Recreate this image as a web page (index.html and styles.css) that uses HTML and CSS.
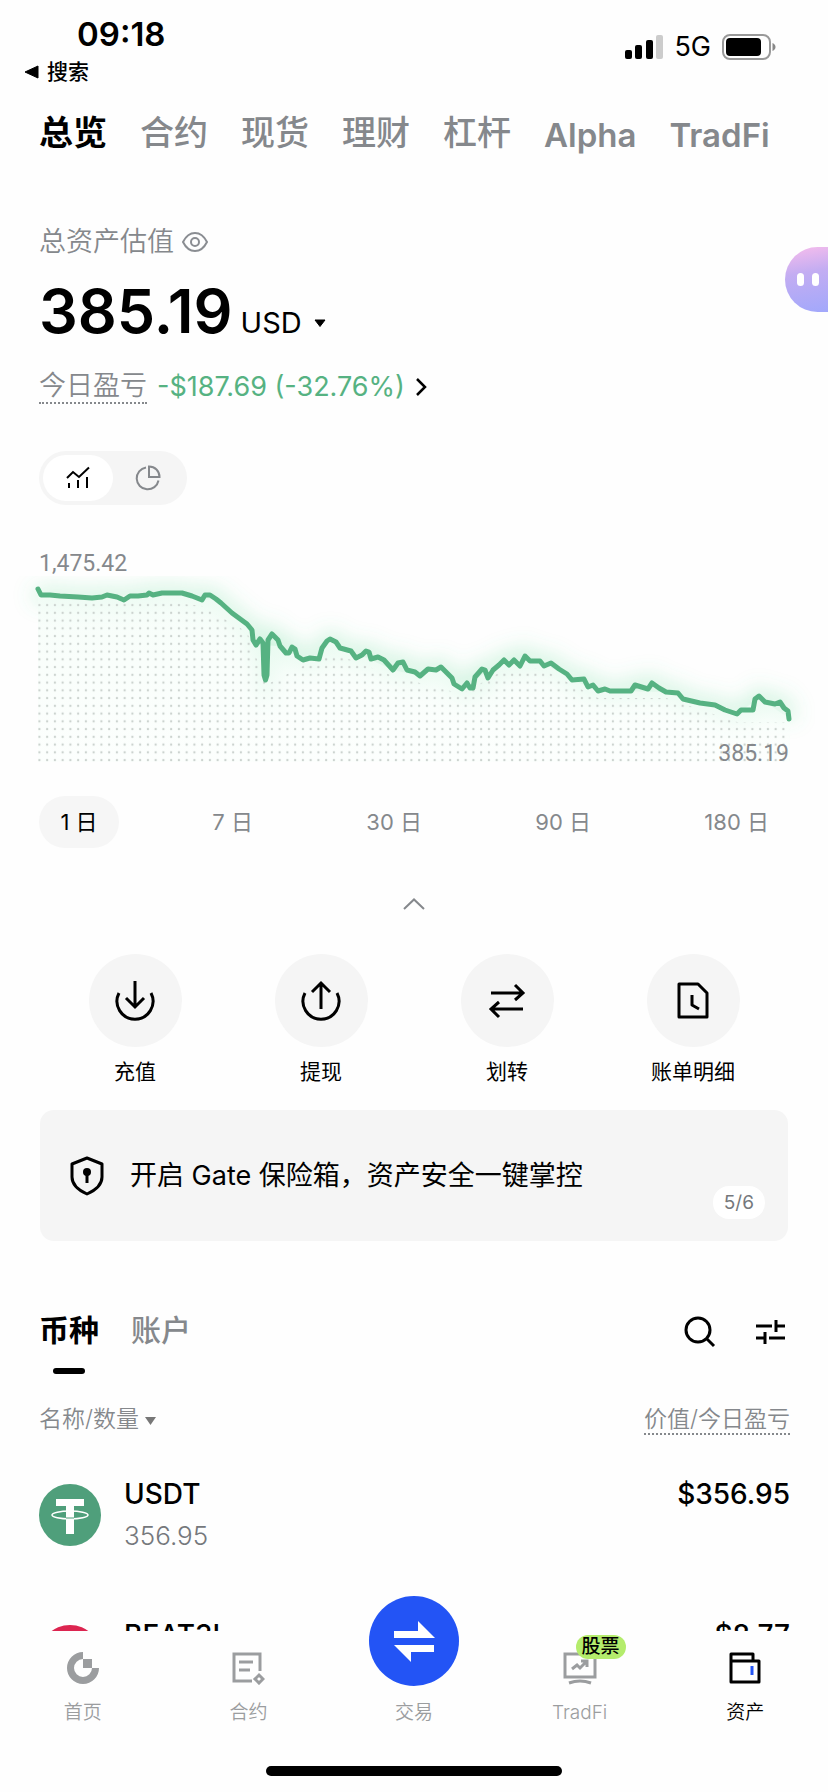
FILE: index.html
```html
<!DOCTYPE html>
<html lang="zh-CN">
  <head>
    <title>资产总览</title>
    <meta charset="utf-8" />
    <meta name="viewport" content="width=device-width, initial-scale=1" />
    <link rel="stylesheet" href="styles.css">
  </head>
  <body>
    <div class="app">
      <main class="content">
        <header class="status">
          <div class="status-left">
            <span class="time">09:18</span>
            <a href="#" class="back">
              <svg width="15" height="14" viewBox="0 0 15 14"><path d="M14 1v12L1 7z" fill="#000" stroke="#000" stroke-linejoin="round" /></svg>
              搜索
            </a>
          </div>
          <div class="status-right">
            <svg width="38" height="24" viewBox="0 0 38 24">
              <rect x="0" y="15" width="7" height="9" rx="2" />
              <rect x="10" y="10" width="7" height="14" rx="2" />
              <rect x="21" y="5" width="7" height="19" rx="2" />
              <rect x="31" y="0" width="7" height="24" rx="2" fill="#ccc" />
            </svg>
            <span class="network">5G</span>
            <svg width="54" height="26" viewBox="0 0 54 26">
              <rect x="1" y="1" width="47" height="24" rx="7" fill="none" stroke="#999" stroke-width="2" />
              <rect x="4" y="4" width="35" height="18" rx="4" />
              <path d="M50.500 9c4 1.500 4 6.500 0 8z" fill="#888" />
            </svg>
          </div>
        </header>

        <nav class="tabs">
          <a href="#" class="active">总览</a>
          <a href="#">合约</a>
          <a href="#">现货</a>
          <a href="#">理财</a>
          <a href="#">杠杆</a>
          <a href="#" class="latin">Alpha</a>
          <a href="#" class="latin">TradFi</a>
        </nav>

        <section class="summary">
          <div class="summary-label">
            总资产估值
            <button class="plain" aria-label="隐藏金额">
              <svg width="26" height="20" viewBox="0 0 26 20" fill="none" stroke="#8a8d92" stroke-width="2">
                <path d="M1 10C4 4 8 1 13 1s9 3 12 9c-3 6-7 9-12 9S4 16 1 10z" />
                <circle cx="13" cy="10" r="4" />
              </svg>
            </button>
          </div>
          <div class="total">
            <strong>385.19</strong>
            <button class="plain currency">
              USD
              <svg width="12" height="8" viewBox="0 0 12 8"><path d="M1 1h10L6 7.500z" fill="#000" stroke="#000" stroke-linejoin="round" /></svg>
            </button>
          </div>
          <a href="#" class="pnl">
            <span class="hint">今日盈亏</span>
            <span class="pnl-value">-$187.69 (-32.76%)</span>
            <svg width="12" height="18" viewBox="0 0 12 18" fill="none" stroke="#000" stroke-width="2.500"><path d="M2 1l8 8-8 8" /></svg>
          </a>
          <div class="toggle">
            <button class="active" aria-label="走势图">
              <svg width="24" height="24" viewBox="0 0 24 24" fill="none" stroke="#000" stroke-width="2">
                <path d="M1 12l6-6 6 5L23 1.500M3 17v5M12 14v8M21 11v11" />
              </svg>
            </button>
            <button aria-label="分布图">
              <svg width="26" height="26" viewBox="0 0 26 26" fill="none" stroke="#85888c" stroke-width="2">
                <path d="M11 2.500a11 11 0 1 0 12.500 13" />
                <path d="M14 1.500v10.500h10.500C24.500 6 20 1.500 14 1.500z" />
              </svg>
            </button>
          </div>
        </section>

        <section class="chart">
          <span class="chart-high">1,475.42</span>
          <svg class="chart-plot" viewBox="0 576 828 192">
            <defs>
              <pattern id="dots" x="35.500" y="601.200" width="7.750" height="7.750" patternUnits="userSpaceOnUse">
                <circle cx="3.900" cy="3.900" r="1.200" fill="#ccd3cf" />
              </pattern>
              <filter id="glow" x="-10%" y="-40%" width="120%" height="180%">
                <feGaussianBlur stdDeviation="10" />
              </filter>
              <linearGradient id="fade" x1="0" y1="0" x2="0" y2="1">
                <stop offset="0" stop-color="#f3fdf7" stop-opacity="0.7" />
                <stop offset="1" stop-color="#fafffc" stop-opacity="0.5" />
              </linearGradient>
              <path id="line" d="M38 589L41 595L50 595L60 596L78 597L92 598L102 597L107 595L117 597L124 600L130 596L138 596L147 595L149 593L153 595L162 593L182 593L192 596L202 600L205 595L210 595L216 599L221 603L232 613L247 624L252 630L253 640L256 645L260 639L263 643L264 675L265.500 680L267 675L268 640L272 634L278 640L280 646L286 653L289 653L292 647L295 649L297 656L303 660L310 658L319 659L322 648L327 641L330 639L336 642L340 648L351 651L356 658L362 655L366 651L369 652L371 659L378 657L384 660L393 670L398 663L403 662L407 670L415 672L420 676L428 669L436 670L441 667L447 673L452 678L454 684L462 689L467 683L470 688L473 688L475 677L482 669L485 670L488 678L493 670L499 665L504 660L509 665L514 660L520 666L525 656L530 661L540 661L544 666L551 663L559 669L567 674L572 680L584 679L588 687L593 685L598 691L605 689L610 691L631 691L635 685L648 689L652 683L659 688L666 692L678 693L683 699L700 703L715 705L725 710L737 714L741 710L753 710L755 699L759 696L765 702L775 704L780 702L784 708L788 711L789 719" />
            </defs>
            <use href="#line" fill="none" stroke="#58d68d" stroke-opacity="0.250" stroke-width="16" filter="url(#glow)" />
            <path d="M38 594L78 597L147 595L182 593L202 600L216 599L247 624L256 645L280 646L303 660L319 659L330 639L351 651L393 670L420 676L441 667L462 689L504 660L540 661L572 680L598 691L666 692L737 714L759 698L790 719V762H38z" fill="url(#fade)" />
            <path d="M38 600L147 600L202 606L247 632L266 685L303 666L330 652L393 676L462 694L504 670L540 668L598 698L666 698L737 722L790 722V764H38z" fill="url(#dots)" />
            <use href="#line" fill="none" stroke="#56b282" stroke-width="5" stroke-linejoin="round" stroke-linecap="round" />
          </svg>
          <span class="chart-low">385.19</span>
        </section>

        <div class="ranges">
          <button class="active">1 日</button>
          <button>7 日</button>
          <button>30 日</button>
          <button>90 日</button>
          <button>180 日</button>
        </div>

        <button class="plain collapse" aria-label="收起">
          <svg width="22" height="12" viewBox="0 0 22 12" fill="none" stroke="#85888c" stroke-width="2"><path d="M1 11L11 1.500 21 11" /></svg>
        </button>

        <div class="actions">
          <a href="#">
            <span class="circle">
              <svg width="42" height="42" viewBox="0 0 42 42" fill="none" stroke="#000" stroke-width="3">
                <path d="M5 13a18 18 0 1 0 32 0M21 1v26M12 18l9 9 9-9" />
              </svg>
            </span>
            充值
          </a>
          <a href="#">
            <span class="circle">
              <svg width="42" height="42" viewBox="0 0 42 42" fill="none" stroke="#000" stroke-width="3">
                <path d="M5 13a18 18 0 1 0 32 0M21 29V3M12 12l9-9 9 9" />
              </svg>
            </span>
            提现
          </a>
          <a href="#">
            <span class="circle">
              <svg width="42" height="42" viewBox="0 0 42 42" fill="none" stroke="#000" stroke-width="3">
                <path d="M5 13h31M29 5l8 8-8 7M37 29H6M13 22l-8 7 8 8" />
              </svg>
            </span>
            划转
          </a>
          <a href="#">
            <span class="circle">
              <svg width="42" height="42" viewBox="0 0 42 42" fill="none" stroke="#000" stroke-width="3">
                <path d="M7 4h19l9 9v24H7zM20 15v10l7 4" stroke-linejoin="round" />
              </svg>
            </span>
            账单明细
          </a>
        </div>

        <a href="#" class="banner">
          <svg width="36" height="40" viewBox="0 0 36 40" fill="none" stroke="#000" stroke-width="3">
            <path d="M18 2l15 6v13c0 8-6 13-15 17C9 34 3 29 3 21V8z" stroke-linejoin="round" />
            <circle cx="18" cy="16" r="4" fill="#000" stroke="none" />
            <path d="M18 17v10" />
          </svg>
          <span>开启 Gate 保险箱，资产安全一键掌控</span>
          <span class="pager">5/6</span>
        </a>

        <section class="assets">
          <div class="asset-bar">
            <button class="asset-tab active">币种</button>
            <button class="asset-tab">账户</button>
            <div class="asset-tools">
              <button class="plain" aria-label="搜索">
                <svg width="32" height="32" viewBox="0 0 32 32" fill="none" stroke="#000" stroke-width="3"><circle cx="14" cy="14" r="12" /><path d="M22 22l8 8" /></svg>
              </button>
              <button class="plain" aria-label="筛选">
                <svg width="30" height="26" viewBox="0 0 30 26" fill="none" stroke="#000" stroke-width="3"><path d="M1 7h16M21 1v12M21 7h9M1 19h9M10 13v12M14 19h16" /></svg>
              </button>
            </div>
          </div>
          <table>
            <thead>
              <tr>
                <th>
                  名称/数量
                  <svg width="11" height="8" viewBox="0 0 11 8"><path d="M0 0h11L5.500 8z" fill="#777" /></svg>
                </th>
                <th><span class="hint">价值/今日盈亏</span></th>
              </tr>
            </thead>
            <tbody>
              <tr>
                <td>
                  <div class="coin">
                    <svg width="62" height="62" viewBox="0 0 62 62">
                      <circle cx="31" cy="31" r="31" fill="#4f9f7b" />
                      <path d="M17 15h28v7h-10v28h-8V22H17z" fill="#fff" />
                      <ellipse cx="31" cy="31" rx="18" ry="4" fill="none" stroke="#fff" stroke-width="1.500" />
                      <path d="M27 34h8" stroke="#4f9f7b" stroke-width="1" />
                    </svg>
                    <div>
                      <div class="coin-name">USDT</div>
                      <div class="coin-amount">356.95</div>
                    </div>
                  </div>
                </td>
                <td class="value">$356.95</td>
              </tr>
              <tr>
                <td>
                  <div class="coin">
                    <svg width="62" height="62" viewBox="0 0 62 62">
                      <circle cx="31" cy="31" r="31" fill="#dc2550" />
                      <path d="M24 6h3v6h-3zM30 6h3v6h-3z" fill="#fff" />
                    </svg>
                    <div>
                      <div class="coin-name">BEAT3L</div>
                    </div>
                  </div>
                </td>
                <td class="value">$8.77</td>
              </tr>
            </tbody>
          </table>
        </section>
      </main>

      <button class="assistant" aria-label="助手"><i></i><i></i></button>

      <footer class="dock">
        <nav class="dock-items">
          <a href="#">
            <svg width="34" height="34" viewBox="0 0 34 34">
              <path d="M17 4.500A12.500 12.500 0 1 0 29.500 17" fill="none" stroke="#9b9d9f" stroke-width="7" />
              <path d="M17 8h9v9h-9z" fill="#9b9d9f" />
            </svg>
            首页
          </a>
          <a href="#">
            <svg width="34" height="34" viewBox="0 0 34 34" fill="none" stroke="#9b9d9f" stroke-width="3">
              <path d="M29 20V3H3v27h18M8 11h14M8 19h11" />
              <path d="M28 24l4 4-4 4-4-4z" />
            </svg>
            合约
          </a>
          <a href="#">
            <span class="trade">
              <svg width="44" height="44" viewBox="0 0 44 44" fill="#fff">
                <path d="M2 12h24V2l17 17H2zM42 33H19v10L2 26h40z" />
              </svg>
            </span>
            交易
          </a>
          <a href="#">
            <svg width="34" height="34" viewBox="0 0 34 34" fill="none" stroke="#9b9d9f" stroke-width="3">
              <path d="M2 3h30v23H2zM6 32q11-4 22 0" />
              <path d="M9 18l5-4 3 3 7-7M18 10h6v6" />
            </svg>
            <span class="badge">股票</span>
            TradFi
          </a>
          <a href="#" class="active">
            <svg width="34" height="34" viewBox="0 0 34 34" fill="none" stroke="#000" stroke-width="3" stroke-linejoin="round">
              <path d="M3 10V3h22v7M3 10h28v21H3z" />
              <path d="M24 15v9" stroke="#2354f5" />
            </svg>
            资产
          </a>
        </nav>
        <div class="home-bar"></div>
      </footer>
    </div>
  </body>
</html>
```
FILE: styles.css
```css
* {
  box-sizing: border-box;
}
html,
body {
  margin: 0;
  height: 100%;
  font-family: Inter, "Noto Sans CJK SC", sans-serif;
  color: #000;
  background: #fefefe;
}
a {
  color: inherit;
  text-decoration: none;
}
button {
  font: inherit;
  color: inherit;
  border: none;
  padding: 0;
  background: none;
}
svg {
  display: block;
  flex-shrink: 0;
}
.plain {
  display: flex;
  align-items: center;
}

.app {
  position: relative;
  height: 100vh;
  display: flex;
  flex-direction: column;
}
.content {
  flex: 1;
  min-height: 0;
  overflow: auto;
  scrollbar-width: none;
}

/* status bar */
.status {
  display: flex;
  justify-content: space-between;
  align-items: flex-start;
  padding: 14px 52px 0 24px;
}
.status-left {
  display: flex;
  flex-direction: column;
  gap: 6px;
}
.time {
  font-size: 33px;
  font-weight: 600;
  line-height: 40px;
  padding-left: 53px;
}
.back {
  display: flex;
  align-items: center;
  gap: 8px;
  font-size: 21px;
  font-weight: 500;
  line-height: 24px;
}
.status-right {
  display: flex;
  align-items: center;
  gap: 11px;
  padding-top: 17px;
}
.network {
  font-size: 27px;
  line-height: 32px;
}

.tabs {
  display: flex;
  gap: 33px;
  padding: 29px 39px 0;
  font-size: 34px;
  font-weight: 500;
  line-height: 40px;
  color: #85888c;
  white-space: nowrap;
}
.tabs .active {
  color: #000;
  font-weight: 700;
}
.tabs .latin {
  font-size: 33px;
  font-weight: 600;
  line-height: 44px;
}

/* totals */
.summary {
  padding: 69px 39px 0;
}
.summary-label {
  display: flex;
  align-items: center;
  gap: 8px;
  font-size: 27px;
  font-weight: 350;
  line-height: 32px;
  color: #85888c;
}
.total {
  display: flex;
  align-items: baseline;
  gap: 8px;
  height: 64px;
  margin-top: 21px;
  line-height: 64px;
}
.total strong {
  font-size: 61px;
  font-weight: 600;
}
.currency {
  gap: 12px;
  font-size: 29px;
}
.pnl {
  display: flex;
  align-items: center;
  gap: 10px;
  margin-top: 27px;
  font-size: 27px;
  line-height: 32px;
}
.hint {
  color: #85888c;
  font-weight: 350;
  border-bottom: 2px dotted #85888c;
}
.pnl-value {
  color: #56b282;
}
.toggle {
  display: flex;
  width: fit-content;
  margin-top: 47px;
  padding: 4px;
  border-radius: 27px;
  background: #f5f5f5;
}
.toggle button {
  display: flex;
  align-items: center;
  justify-content: center;
  width: 70px;
  height: 46px;
  border-radius: 23px;
}
.toggle .active {
  background: #fff;
}

/* chart */
.chart {
  position: relative;
  margin-top: 47px;
  font-family: Roboto, sans-serif;
  font-size: 23px;
  line-height: 24px;
  color: #85888c;
}
.chart-high {
  display: block;
  padding: 0 39px;
}
.chart-plot {
  width: 100%;
}
.chart-low {
  position: absolute;
  right: 39px;
  bottom: 2px;
}
.ranges {
  display: flex;
  justify-content: space-between;
  padding: 28px 39px 0;
}
.ranges button {
  min-width: 80px;
  padding: 0 20px;
  border-radius: 26px;
  font-size: 22px;
  line-height: 52px;
  color: #85888c;
}
.ranges .active {
  color: #000;
  background: #f6f6f6;
}
.collapse {
  justify-content: center;
  width: 100%;
  height: 40px;
  margin-top: 36px;
}

.actions {
  display: grid;
  grid-template-columns: repeat(4, 1fr);
  padding: 30px 42px 0;
}
.actions a {
  display: flex;
  flex-direction: column;
  align-items: center;
  gap: 13px;
  font-size: 21px;
  line-height: 24px;
}
.circle {
  display: flex;
  align-items: center;
  justify-content: center;
  width: 93px;
  height: 93px;
  border-radius: 50%;
  background: #f5f5f5;
}

.banner {
  position: relative;
  display: flex;
  align-items: center;
  gap: 25px;
  margin: 26px 40px 0;
  padding: 45px 29px;
  border-radius: 14px;
  font-size: 27px;
  line-height: 41px;
  background: #f5f5f5;
}
.pager {
  position: absolute;
  right: 23px;
  bottom: 22px;
  padding: 0 11px;
  border-radius: 16px;
  font-size: 19px;
  line-height: 33px;
  color: #75787c;
  background: #fff;
}

/* asset list */
.assets {
  padding: 71px 38px 0 39px;
}
.asset-bar {
  display: flex;
  align-items: flex-start;
  gap: 32px;
}
.asset-tab {
  font-size: 30px;
  font-weight: 500;
  line-height: 36px;
  color: #85888c;
}
.asset-tab.active {
  font-weight: 700;
  color: #000;
}
.asset-tab.active::after {
  content: "";
  display: block;
  width: 32px;
  height: 6px;
  margin: 20px auto 0;
  border-radius: 3px;
  background: #000;
}
.asset-tools {
  display: flex;
  gap: 39px;
  margin-left: auto;
  padding: 4px 5px 0 0;
}
table {
  width: 100%;
  margin-top: 31px;
  border-collapse: collapse;
}
th,
td {
  padding: 0;
  text-align: left;
  vertical-align: top;
}
th:last-child,
td:last-child {
  text-align: right;
}
th {
  height: 38px;
  font-size: 23px;
  font-weight: 350;
  line-height: 28px;
  color: #85888c;
}
th svg {
  display: inline-block;
  vertical-align: middle;
}
td {
  height: 141px;
  padding-top: 30px;
  line-height: 42px;
}
.coin {
  display: flex;
  align-items: center;
  gap: 23px;
  height: 84px;
}
.coin > div {
  height: 84px;
}
.coin-name {
  font-size: 28px;
  font-weight: 500;
}
.coin-amount {
  font-size: 26px;
  font-weight: 300;
  color: #75787c;
}
.value {
  font-size: 28px;
  font-weight: 500;
}

.assistant {
  position: absolute;
  top: 247px;
  right: 0;
  display: flex;
  align-items: center;
  gap: 8px;
  width: 43px;
  height: 65px;
  padding-left: 12px;
  border-radius: 33px 0 0 33px;
  background: linear-gradient(170deg, #f8bdec, #c3adf2 40%, #a2a8fb);
}
.assistant i {
  width: 7px;
  height: 13px;
  border-radius: 4px;
  background: #fff;
}

/* bottom bar */
.dock {
  position: relative;
  padding: 20px 0 16px;
  background: #fefefe;
}
.dock-items {
  display: grid;
  grid-template-columns: repeat(5, 1fr);
}
.dock-items a {
  position: relative;
  display: flex;
  flex-direction: column;
  align-items: center;
  justify-content: flex-end;
  gap: 16px;
  font-size: 19px;
  font-weight: 350;
  line-height: 24px;
  color: #9b9d9f;
}
.dock-items .active {
  color: #000;
}
.trade {
  display: flex;
  align-items: center;
  justify-content: center;
  width: 90px;
  height: 90px;
  margin: -56px 0 -1px;
  border-radius: 50%;
  background: #2354f5;
}
.badge {
  position: absolute;
  top: -16px;
  left: 50%;
  margin-left: -4px;
  padding: 0 6px;
  border-radius: 12px;
  font-weight: 500;
  color: #000;
  background: #b4ec6c;
}
.home-bar {
  width: 296px;
  height: 10px;
  margin: 41px auto 0;
  border-radius: 5px;
  background: #000;
}
```
